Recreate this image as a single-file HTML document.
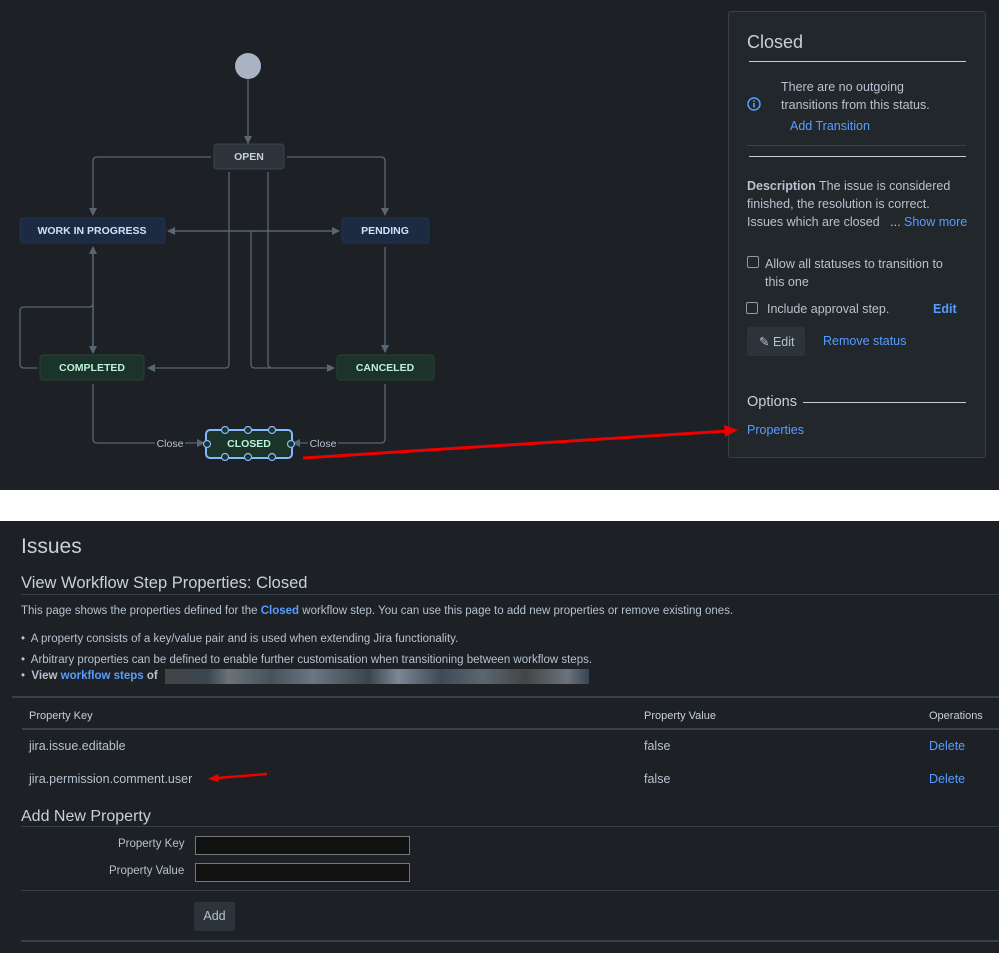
<!DOCTYPE html>
<html><head><meta charset="utf-8"><style>
body{margin:0;width:999px;height:953px;background:#fff;font-family:"Liberation Sans",sans-serif;position:relative;overflow:hidden}
.top{position:absolute;left:0;top:0;width:999px;height:490px;background:#1d2025}
.bot{position:absolute;left:0;top:521px;width:999px;height:432px;background:#1d2025;color:#b6c2cf}
.a{position:absolute;white-space:nowrap}
.panel{position:absolute;left:728px;top:11px;width:256px;height:445px;background:#22272b;border:1px solid #3a3f45;border-radius:3px;color:#b6c2cf;font-size:12.5px}
.link{color:#579dff}
.hr{position:absolute;height:1px;background:#38414a}
.cb{position:absolute;width:10px;height:10px;border:1px solid #8c9bab;border-radius:2px}
.inp{position:absolute;left:195px;width:213px;height:17px;background:#111;border:1px solid #777}
</style></head><body>
<div class="top">
<svg width="999" height="490" style="position:absolute;left:0;top:0" font-family="Liberation Sans" font-weight="bold" font-size="10.5">
<defs><marker id="ar" markerWidth="8" markerHeight="8" refX="7" refY="4" orient="auto" markerUnits="userSpaceOnUse"><path d="M0,0L8,4L0,8z" fill="#596773"/></marker></defs>
<g stroke="#596773" stroke-width="1.3" fill="none">
<circle cx="248" cy="66" r="13" fill="#a9b3c4" stroke="none"/>
<path d="M248,79V143" marker-end="url(#ar)"/>
<path d="M211,157H97Q93,157 93,161V215" marker-end="url(#ar)"/>
<path d="M287,157H381Q385,157 385,161V215" marker-end="url(#ar)"/>
<path d="M229,172V364Q229,368 225,368H148" marker-end="url(#ar)"/>
<path d="M268,172V364Q268,368 272,368H334" marker-end="url(#ar)"/>
<path d="M168,231H339" marker-end="url(#ar)"/><path d="M339,231H168" marker-end="url(#ar)"/>
<path d="M251,231V364Q251,368 255,368H270"/>
<path d="M93,250V353" marker-end="url(#ar)"/><path d="M93,350V247" marker-end="url(#ar)"/>
<path d="M37,368H24Q20,368 20,364V311Q20,307 24,307H89Q93,307 93,303"/>
<path d="M385,247V352" marker-end="url(#ar)"/>
<path d="M93,384V439Q93,443 97,443H155M185,443H204" marker-end="url(#ar)"/>
<path d="M385,384V439Q385,443 381,443H338M308,443H293" marker-end="url(#ar)"/>
</g>
<rect x="214" y="144" width="70" height="25" rx="3" fill="#2c333a" stroke="#3c434b"/>
<text x="249" y="160" fill="#c7d1db" text-anchor="middle">OPEN</text>
<rect x="20" y="218" width="145" height="25" rx="3" fill="#1c2b41" stroke="#1f3350"/>
<text x="92" y="234" fill="#cce0ff" text-anchor="middle">WORK IN PROGRESS</text>
<rect x="342" y="218" width="87" height="25" rx="3" fill="#1c2b41" stroke="#1f3350"/>
<text x="385" y="234" fill="#cce0ff" text-anchor="middle">PENDING</text>
<rect x="40" y="355" width="104" height="25" rx="3" fill="#1c3329" stroke="#26432f"/>
<text x="92" y="371" fill="#baf3db" text-anchor="middle">COMPLETED</text>
<rect x="337" y="355" width="97" height="25" rx="3" fill="#1c3329" stroke="#26432f"/>
<text x="385" y="371" fill="#baf3db" text-anchor="middle">CANCELED</text>
<rect x="206" y="430" width="86" height="28" rx="4" fill="#1c3329" stroke="#85b8ff" stroke-width="2"/>
<text x="249" y="447" fill="#baf3db" text-anchor="middle">CLOSED</text>
<g fill="#1c3329" stroke="#85b8ff" stroke-width="1.2">
<circle cx="225" cy="430" r="3.5"/><circle cx="248" cy="430" r="3.5"/><circle cx="272" cy="430" r="3.5"/>
<circle cx="225" cy="457" r="3.5"/><circle cx="248" cy="457" r="3.5"/><circle cx="272" cy="457" r="3.5"/>
<circle cx="207" cy="444" r="3.5"/><circle cx="291" cy="444" r="3.5"/></g>
<text x="170" y="447" fill="#b6c2cf" text-anchor="middle" font-weight="normal">Close</text>
<text x="323" y="447" fill="#b6c2cf" text-anchor="middle" font-weight="normal">Close</text>
</svg>
<div class="panel">
<div class="a" style="left:18px;top:20px;font-size:18px;color:#c7d1db">Closed</div>
<div style="position:absolute;left:20px;top:49px;width:217px;height:1px;background:#ccc"></div>
<svg class="a" style="left:18px;top:85px" width="14" height="14"><circle cx="7" cy="7" r="6" fill="none" stroke="#579dff" stroke-width="1.5"/><rect x="6.2" y="6" width="1.6" height="4.5" fill="#579dff"/><rect x="6.2" y="3.3" width="1.6" height="1.6" fill="#579dff"/></svg>
<div class="a" style="left:52px;top:66px;line-height:18px">There are no outgoing<br>transitions from this status.</div>
<div class="a link" style="left:61px;top:107px">Add Transition</div>
<div class="hr" style="left:18px;top:133px;width:219px"></div>
<div style="position:absolute;left:20px;top:144px;width:217px;height:1px;background:#ccc"></div>
<div class="a" style="left:18px;top:165px;line-height:18px"><b>Description</b> The issue is considered<br>finished, the resolution is correct.<br>Issues which are closed &nbsp;&nbsp;... <span class="link">Show more</span></div>
<div class="cb" style="left:18px;top:244px"></div>
<div class="a" style="left:36px;top:243px;line-height:18px">Allow all statuses to transition to<br>this one</div>
<div class="cb" style="left:17px;top:290px"></div>
<div class="a" style="left:38px;top:290px">Include approval step.</div>
<div class="a link" style="left:204px;top:290px;font-weight:bold">Edit</div>
<div class="a" style="left:18px;top:315px;width:58px;height:29px;background:#2c333a;border-radius:3px"></div>
<div class="a" style="left:30px;top:322px">✎ Edit</div>
<div class="a link" style="left:94px;top:322px">Remove status</div>
<div class="a" style="left:18px;top:382px;font-size:14.5px;color:#c7d1db">Options</div>
<div style="position:absolute;left:74px;top:390px;width:163px;height:1px;background:#ccc"></div>
<div class="a link" style="left:18px;top:411px">Properties</div>
</div>
<svg width="999" height="490" style="position:absolute;left:0;top:0">
<path d="M303,458L728,431" stroke="#e00" stroke-width="3"/>
<path d="M738,430L724,425L725,437z" fill="#e00"/>
</svg>
</div>
<div class="bot">
<div class="a" style="left:21px;top:14px;font-size:21px;color:#c7d1db">Issues</div>
<div class="a" style="left:21px;top:53px;font-size:16.5px;color:#c7d1db">View Workflow Step Properties: Closed</div>
<div class="hr" style="left:21px;top:73px;width:978px"></div>
<div class="a" style="left:21px;top:84px;font-size:11.5px">This page shows the properties defined for the <b class="link">Closed</b> workflow step. You can use this page to add new properties or remove existing ones.</div>
<div class="a" style="left:21px;top:112px;font-size:11.5px">•&nbsp; A property consists of a key/value pair and is used when extending Jira functionality.</div>
<div class="a" style="left:21px;top:133px;font-size:11.5px">•&nbsp; Arbitrary properties can be defined to enable further customisation when transitioning between workflow steps.</div>
<div class="a" style="left:21px;top:149px;font-size:11.5px">•&nbsp; <b>View <span class="link">workflow steps</span> of</b></div>
<div class="a" style="left:165px;top:148px;width:424px;height:15px;background:linear-gradient(90deg,#444 0,#3a4550 10%,#6a7278 15%,#47525c 25%,#6c7582 35%,#3b444e 48%,#7b8794 55%,#3f4a56 65%,#5b6670 75%,#444 85%,#6a737d 95%,#3a4452)"></div>
<div class="hr" style="left:12px;top:175px;width:987px;height:2px"></div>
<div class="a" style="left:29px;top:189px;font-size:11px;color:#c7d1db">Property Key</div>
<div class="a" style="left:644px;top:189px;font-size:11px;color:#c7d1db">Property Value</div>
<div class="a" style="left:929px;top:189px;font-size:11px;color:#c7d1db">Operations</div>
<div class="hr" style="left:22px;top:207px;width:977px;height:2px"></div>
<div class="a" style="left:29px;top:218px;font-size:12.5px">jira.issue.editable</div>
<div class="a" style="left:644px;top:218px;font-size:12.5px">false</div>
<div class="a link" style="left:929px;top:218px;font-size:12.5px">Delete</div>
<div class="a" style="left:29px;top:251px;font-size:12.5px">jira.permission.comment.user</div>
<div class="a" style="left:644px;top:251px;font-size:12.5px">false</div>
<div class="a link" style="left:929px;top:251px;font-size:12.5px">Delete</div>
<svg class="a" style="left:205px;top:248px" width="65" height="15"><path d="M62,5L12,9" stroke="#e00" stroke-width="2.5"/><path d="M3,10L13,5L14,13z" fill="#e00"/></svg>
<div class="a" style="left:21px;top:287px;font-size:16px;color:#c7d1db">Add New Property</div>
<div class="hr" style="left:21px;top:305px;width:978px"></div>
<div class="a" style="left:118px;top:317px;font-size:11.5px">Property Key</div>
<div class="inp" style="top:315px"></div>
<div class="a" style="left:109px;top:344px;font-size:11.5px">Property Value</div>
<div class="inp" style="top:342px"></div>
<div class="hr" style="left:21px;top:369px;width:978px"></div>
<div class="a" style="left:194px;top:381px;width:41px;height:29px;background:#2c333a;border-radius:2px;text-align:center;line-height:29px;font-size:12.5px">Add</div>
<div class="hr" style="left:21px;top:419px;width:978px;height:2px"></div>
</div>
</body></html>
